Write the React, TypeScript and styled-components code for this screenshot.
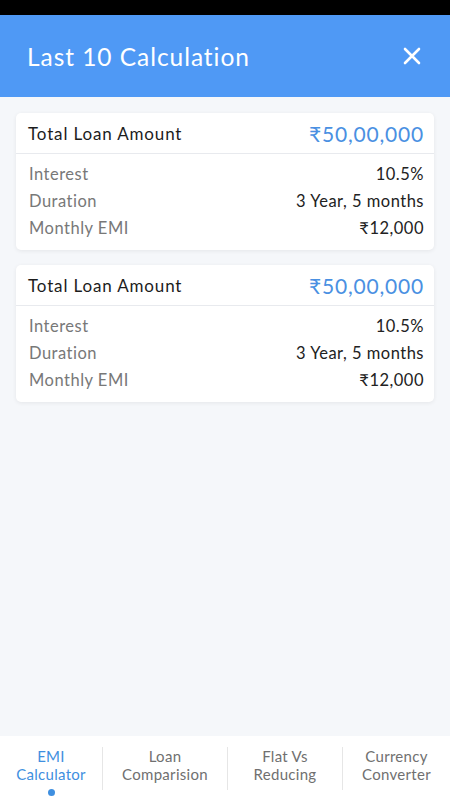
import React, { type FC } from 'react'
import styled, { createGlobalStyle } from 'styled-components'

type Calc = {
	amount: string
	interest: string
	duration: string
	emi: string
}

const history: Calc[] = [
	{ amount: '₹50,00,000', interest: '10.5%', duration: '3 Year, 5 months', emi: '₹12,000' },
	{ amount: '₹50,00,000', interest: '10.5%', duration: '3 Year, 5 months', emi: '₹12,000' },
]

const tabs = [
	{ label: ['EMI', 'Calculator'], active: true },
	{ label: ['Loan', 'Comparision'], active: false },
	{ label: ['Flat Vs', 'Reducing'], active: false },
	{ label: ['Currency', 'Converter'], active: false },
]

const GlobalStyle = createGlobalStyle`
	* { box-sizing: border-box; }
	html, body { margin: 0; padding: 0; }
	body {
		font-family: Lato, 'Open Sans', sans-serif;
		background: #f5f7fa;
	}
`

const Screen = styled.div`
	width: 450px;
	height: 800px;
	display: flex;
	flex-direction: column;
	background: #f5f7fa;
`

const StatusBar = styled.div`
	height: 15px;
	background: #000;
`

const Header = styled.header`
	height: 82px;
	background: #4f99f5;
	display: flex;
	align-items: center;
	justify-content: space-between;
	padding: 0 28px 0 27px;
`

const Title = styled.h1`
	margin: 0;
	color: #fff;
	font-size: 24.5px;
	font-weight: 400;
	letter-spacing: 0.95px;
`

const CloseButton = styled.button`
	border: 0;
	background: none;
	padding: 0;
	width: 20px;
	height: 20px;
	display: flex;
	align-items: center;
	justify-content: center;
`

const List = styled.main`
	flex: 1;
	display: flex;
	flex-direction: column;
	gap: 15px;
	padding: 16px 16px 0 16px;
`

const Card = styled.section`
	background: #fff;
	border-radius: 5px;
	box-shadow: 0 1px 4px rgba(0, 0, 0, 0.07);
	overflow: hidden;
`

const CardHead = styled.div`
	height: 41px;
	display: flex;
	align-items: center;
	justify-content: space-between;
	padding: 0 10px 0 12px;
	border-bottom: 1px solid #e8eaee;
`

const HeadLabel = styled.span`
	font-size: 17px;
	color: #1c1c1c;
	letter-spacing: 0.85px;
`

const Amount = styled.span`
	font-size: 21px;
	color: #4a90e2;
	letter-spacing: 0.8px;
`

const Rows = styled.div`
	display: flex;
	flex-direction: column;
	padding: 6px 10px 9px 13px;
`

const Row = styled.div`
	height: 27px;
	display: flex;
	align-items: center;
	justify-content: space-between;
	font-size: 16.5px;
	letter-spacing: 0.5px;
`

const Label = styled.span`
	color: #787878;
`

const Value = styled.span`
	color: #222;
`

const TabBar = styled.nav`
	height: 64px;
	background: #fff;
	display: grid;
	grid-template-columns: 103px 125px 115px 1fr;
	padding-top: 11px;
`

const Tab = styled.div<{ $active: boolean; $last: boolean }>`
	position: relative;
	height: 43px;
	display: flex;
	flex-direction: column;
	align-items: center;
	border-right: ${({ $last }) => ($last ? '0' : '1px solid #e6e6e6')};
	color: ${({ $active }) => ($active ? '#3f8fe0' : '#707070')};
	font-size: 15px;
	line-height: 18px;
	letter-spacing: 0.3px;
`

const Dot = styled.span`
	position: absolute;
	bottom: -6px;
	width: 7px;
	height: 7px;
	border-radius: 50%;
	background: #3f8fe0;
`

const CalcCard: FC<{ item: Calc }> = ({ item }) => (
	<Card>
		<CardHead>
			<HeadLabel>Total Loan Amount</HeadLabel>
			<Amount>{item.amount}</Amount>
		</CardHead>
		<Rows>
			<Row>
				<Label>Interest</Label>
				<Value>{item.interest}</Value>
			</Row>
			<Row>
				<Label>Duration</Label>
				<Value>{item.duration}</Value>
			</Row>
			<Row>
				<Label>Monthly EMI</Label>
				<Value>{item.emi}</Value>
			</Row>
		</Rows>
	</Card>
)

const App: FC = () => (
	<>
		<GlobalStyle />
		<Screen>
			<StatusBar />
			<Header>
				<Title>Last 10 Calculation</Title>
				<CloseButton aria-label='close'>
					<svg width='18' height='18' viewBox='0 0 18 18'>
						<path d='M2 2 L16 16 M16 2 L2 16' stroke='#fff' strokeWidth='2.6' strokeLinecap='round' />
					</svg>
				</CloseButton>
			</Header>
			<List>
				{history.map((item, i) => (
					<CalcCard key={i} item={item} />
				))}
			</List>
			<TabBar>
				{tabs.map((t, i) => (
					<Tab key={i} $active={t.active} $last={i === tabs.length - 1}>
						<span>{t.label[0]}</span>
						<span>{t.label[1]}</span>
						{t.active && <Dot />}
					</Tab>
				))}
			</TabBar>
		</Screen>
	</>
)

export default App
